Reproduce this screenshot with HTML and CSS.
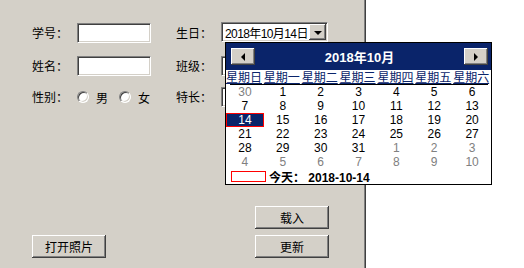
FILE: index.html
```html
<!DOCTYPE html>
<html lang="zh-CN">
<head>
    <meta charset="UTF-8">
    <title>学生信息</title>
    <link rel="stylesheet" href="styles.css">
</head>
<body>

<div class="window">
    <div class="form">
        <div class="fields">
            <label class="lbl">学号：</label>
            <input class="box" type="text">
            <label class="lbl">生日：</label>
            <div class="picker">
                <span class="picker-text">2018年10月14日</span>
                <span class="drop"><i class="tri-down"></i></span>
            </div>

            <label class="lbl">姓名：</label>
            <input class="box" type="text">
            <label class="lbl">班级：</label>
            <input class="box wide" type="text">

            <label class="lbl">性别：</label>
            <div class="radios">
                <span class="radio"></span><span class="radio-text">男</span>
                <span class="radio"></span><span class="radio-text">女</span>
            </div>
            <label class="lbl">特长：</label>
            <input class="box wide" type="text">
        </div>

        <div class="actions">
            <button class="btn load">载入</button>
            <button class="btn photo">打开照片</button>
            <button class="btn update">更新</button>
        </div>
    </div>

    <div class="side"></div>

    <div class="calendar">
        <div class="cal-head">
            <span class="nav"><i class="tri-left"></i></span>
            <span class="cal-title">2018年10月</span>
            <span class="nav"><i class="tri-right"></i></span>
        </div>
        <div class="weekdays">
            <span>星期日</span><span>星期一</span><span>星期二</span><span>星期三</span><span>星期四</span><span>星期五</span><span>星期六</span>
        </div>
        <div class="rule"></div>
        <div class="days">
            <span class="other">30</span><span>1</span><span>2</span><span>3</span><span>4</span><span>5</span><span>6</span>
            <span>7</span><span>8</span><span>9</span><span>10</span><span>11</span><span>12</span><span>13</span>
            <span class="selected">14</span><span>15</span><span>16</span><span>17</span><span>18</span><span>19</span><span>20</span>
            <span>21</span><span>22</span><span>23</span><span>24</span><span>25</span><span>26</span><span>27</span>
            <span>28</span><span>29</span><span>30</span><span>31</span><span class="other">1</span><span class="other">2</span><span class="other">3</span>
            <span class="other">4</span><span class="other">5</span><span class="other">6</span><span class="other">7</span><span class="other">8</span><span class="other">9</span><span class="other">10</span>
        </div>
        <div class="today">
            <span class="today-box"></span>
            <span class="today-text">今天： 2018-10-14</span>
        </div>
    </div>
</div>

</body>
</html>
```

FILE: styles.css
```css
body {
    margin: 0;
    background: #d4d0c8;
    font-family: "Liberation Sans", "Noto Sans CJK SC", sans-serif;
    font-size: 12px;
    color: #000;
    overflow: hidden;
}

.window {
    position: relative;
    display: flex;
    height: 268px;
}

.form {
    width: 364px;
    padding: 23px 0 0 32px;
    box-sizing: border-box;
}

.fields {
    display: grid;
    grid-template-columns: 45px 99px 45px 107px;
    grid-template-rows: 33px 31px 20px;
    align-items: start;
}

.lbl {
    height: 20px;
    line-height: 20px;
    font-family: "Noto Sans CJK SC", sans-serif;
}

.box {
    width: 74px;
    height: 20px;
    box-sizing: border-box;
    margin: 0;
    padding: 0 2px;
    background: #fff;
    border: 1px solid;
    border-color: #808080 #fff #fff #808080;
    box-shadow: inset 1px 1px #404040, inset -1px -1px #d4d0c8;
    outline: none;
}

.box.wide {
    width: 107px;
}

.picker {
    display: flex;
    align-items: center;
    justify-content: space-between;
    width: 107px;
    height: 20px;
    margin-top: -1px;
    box-sizing: border-box;
    padding: 0 1px 0 3px;
    background: #fff;
    border: 1px solid;
    border-color: #808080 #fff #fff #808080;
    box-shadow: inset 1px 1px #404040, inset -1px -1px #d4d0c8;
}

.picker-text {
    font-size: 12px;
    letter-spacing: -0.6px;
    white-space: nowrap;
}

.drop, .nav {
    display: flex;
    align-items: center;
    justify-content: center;
    box-sizing: border-box;
    background: #d4d0c8;
    box-shadow: inset -1px -1px #404040, inset 1px 1px #fff, inset -2px -2px #808080;
}

.drop {
    flex: none;
    width: 17px;
    height: 16px;
}

.tri-down {
    width: 0;
    height: 0;
    border-left: 4px solid transparent;
    border-right: 4px solid transparent;
    border-top: 4px solid #000;
    margin-top: 1px;
}

.radios {
    display: flex;
    align-items: center;
    height: 20px;
}

.radio {
    width: 12px;
    height: 12px;
    box-sizing: border-box;
    border-radius: 50%;
    background: #fff;
    border: 1px solid;
    border-color: #808080 #fff #fff #808080;
    box-shadow: inset 1px 1px #404040, inset -1px -1px #d4d0c8;
}

.radio-text {
    margin-left: 7px;
    margin-right: 11px;
    font-family: "Noto Sans CJK SC", sans-serif;
}

.actions {
    display: grid;
    grid-template-columns: 74px 149px 74px;
    grid-template-rows: 23px 23px;
    row-gap: 6px;
    margin-top: 99px;
}

.btn {
    margin: 0;
    padding: 0;
    font-family: "Noto Sans CJK SC", sans-serif;
    font-size: 12px;
    color: #000;
    background: #d4d0c8;
    border: none;
    box-shadow: inset -1px -1px #404040, inset 1px 1px #fff, inset -2px -2px #808080;
}

.load {
    grid-column: 3;
    grid-row: 1;
}

.photo {
    grid-column: 1;
    grid-row: 2;
}

.update {
    grid-column: 3;
    grid-row: 2;
}

.side {
    flex: 1;
    background: #fff;
    border-left: 1px solid #808080;
    box-shadow: inset 1px 0 #404040;
}

/* drop-down month calendar, lies over the form */
.calendar {
    position: absolute;
    left: 225px;
    top: 42px;
    width: 265px;
    height: 141px;
    border: 1px solid #000;
    background: #fff;
    z-index: 2;
}

.cal-head {
    display: flex;
    align-items: center;
    height: 27px;
    padding: 0 3px 0 5px;
    background: #0a246a;
}

.nav {
    width: 24px;
    height: 17px;
}

.tri-left {
    width: 0;
    height: 0;
    border-top: 4px solid transparent;
    border-bottom: 4px solid transparent;
    border-right: 4px solid #000;
}

.tri-right {
    width: 0;
    height: 0;
    border-top: 4px solid transparent;
    border-bottom: 4px solid transparent;
    border-left: 4px solid #000;
}

.cal-title {
    flex: 1;
    text-align: center;
    color: #fff;
    font-weight: bold;
    font-size: 13px;
}

.weekdays {
    display: grid;
    grid-template-columns: repeat(7, 1fr);
    height: 14px;
    line-height: 14px;
    color: #0a246a;
    font-family: "Noto Sans CJK SC", sans-serif;
    text-decoration: underline;
    white-space: nowrap;
}

.rule {
    height: 1px;
    margin: 0 3px 0 4px;
    background: #000;
}

.days {
    display: grid;
    grid-template-columns: repeat(7, 1fr);
    grid-auto-rows: 14px;
    line-height: 14px;
    text-align: center;
}

.days .other {
    color: #808080;
}

.days .selected {
    background: #0a246a;
    color: #fff;
    box-shadow: inset 0 0 0 1px #ff0000;
}

.today {
    display: flex;
    align-items: center;
    height: 15px;
    padding-left: 5px;
}

.today-box {
    flex: none;
    width: 35px;
    height: 11px;
    box-shadow: inset 0 0 0 1px #ff0000;
}

.today-text {
    margin-left: 3px;
    font-weight: bold;
    white-space: nowrap;
}
```
